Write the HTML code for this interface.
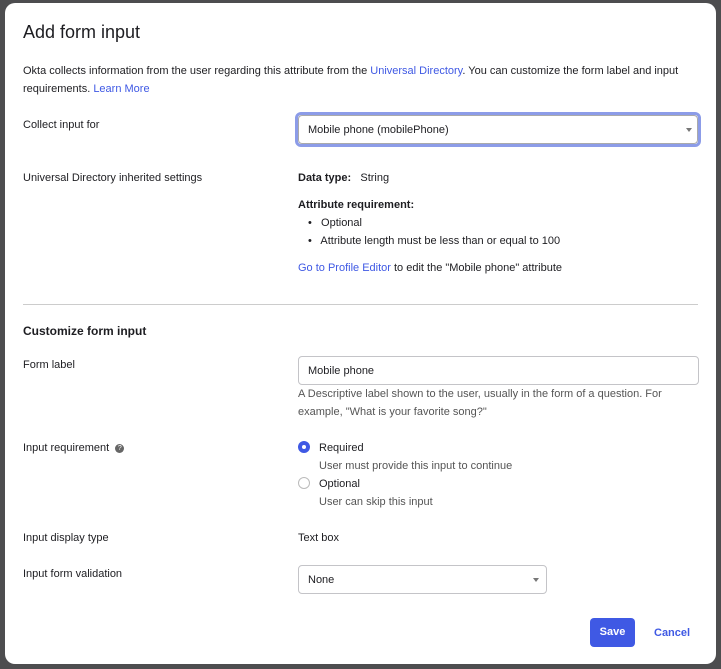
<!DOCTYPE html>
<html><head><style>
body{margin:0;width:721px;height:669px;background:#4d4d4f;font-family:"Liberation Sans",sans-serif;color:#1d1d21;overflow:hidden;position:relative}
.m{position:absolute;left:5px;top:3px;width:711px;height:661px;background:#fff;border-radius:10px}
.t{position:absolute;font-size:11px;line-height:14px;white-space:nowrap}
.c{transform:translateY(-6px)}
a{color:#3f59e4;text-decoration:none}
.g{color:#555}
.box{position:absolute;border:1px solid #c4c4c8;border-radius:4px;background:#fff;box-sizing:border-box}
.arr{position:absolute;width:0;height:0;border-left:3px solid transparent;border-right:3px solid transparent;border-top:4px solid #777}
</style></head><body>
<div class="m"></div>
<div class="t" style="left:23px;top:20px;font-size:18px;line-height:24px;color:#1d1d21">Add form input</div>
<div class="t c" style="left:23px;top:70px">Okta collects information from the user regarding this attribute from the <a>Universal Directory</a>. You can customize the form label and input</div>
<div class="t c" style="left:23px;top:88px">requirements. <a>Learn More</a></div>
<div class="t c" style="left:23px;top:124px">Collect input for</div>
<div class="box" style="left:295px;top:112px;width:406px;height:35px;border:3px solid #8c9ce8;border-radius:6px"></div>
<div class="box" style="left:298px;top:115px;width:400px;height:29px;border-color:#aaa"></div>
<div class="t c" style="left:308px;top:129px">Mobile phone (mobilePhone)</div>
<div class="arr" style="left:686px;top:128px"></div>
<div class="t c" style="left:23px;top:177px">Universal Directory inherited settings</div>
<div class="t c" style="left:298px;top:177px"><b>Data type:</b>&nbsp;&nbsp; String</div>
<div class="t c" style="left:298px;top:204px"><b>Attribute requirement:</b></div>
<div class="t c" style="left:308px;top:222px">•&nbsp;&nbsp; Optional</div>
<div class="t c" style="left:308px;top:240px">•&nbsp;&nbsp; Attribute length must be less than or equal to 100</div>
<div class="t c" style="left:298px;top:267px"><a>Go to Profile Editor</a> to edit the "Mobile phone" attribute</div>
<div style="position:absolute;left:23px;top:304px;width:675px;height:1px;background:#ccc"></div>
<div class="t c" style="left:23px;top:330px;font-size:12px;font-weight:bold">Customize form input</div>
<div class="t c" style="left:23px;top:364px">Form label</div>
<div class="box" style="left:298px;top:356px;width:401px;height:29px"></div>
<div class="t c" style="left:308px;top:370px">Mobile phone</div>
<div class="t c g" style="left:298px;top:393px">A Descriptive label shown to the user, usually in the form of a question. For</div>
<div class="t c g" style="left:298px;top:411px">example, "What is your favorite song?"</div>
<div class="t c" style="left:23px;top:447px">Input requirement <span style="display:inline-block;width:9px;height:9px;border-radius:50%;background:#666;color:#fff;font-size:7px;line-height:9px;text-align:center;vertical-align:middle;margin-left:3px">?</span></div>
<div style="position:absolute;left:298px;top:441px;width:12px;height:12px;border-radius:50%;background:#3f59e4"><div style="position:absolute;left:4px;top:4px;width:4px;height:4px;border-radius:50%;background:#fff"></div></div>
<div class="t c" style="left:319px;top:447px">Required</div>
<div class="t c g" style="left:319px;top:465px">User must provide this input to continue</div>
<div style="position:absolute;left:298px;top:477px;width:10px;height:10px;border-radius:50%;border:1px solid #bbb"></div>
<div class="t c" style="left:319px;top:483px">Optional</div>
<div class="t c g" style="left:319px;top:501px">User can skip this input</div>
<div class="t c" style="left:23px;top:537px">Input display type</div>
<div class="t c" style="left:298px;top:537px">Text box</div>
<div class="t c" style="left:23px;top:573px">Input form validation</div>
<div class="box" style="left:298px;top:565px;width:249px;height:29px"></div>
<div class="t c" style="left:308px;top:579px">None</div>
<div class="arr" style="left:533px;top:578px"></div>
<div style="position:absolute;left:590px;top:618px;width:45px;height:29px;background:#3f59e4;border-radius:4px;color:#fff;font-size:11px;font-weight:bold;line-height:29px;text-align:center">Save</div>
<div class="t c" style="left:654px;top:632px;font-weight:bold;color:#3f59e4">Cancel</div>
</body></html>
